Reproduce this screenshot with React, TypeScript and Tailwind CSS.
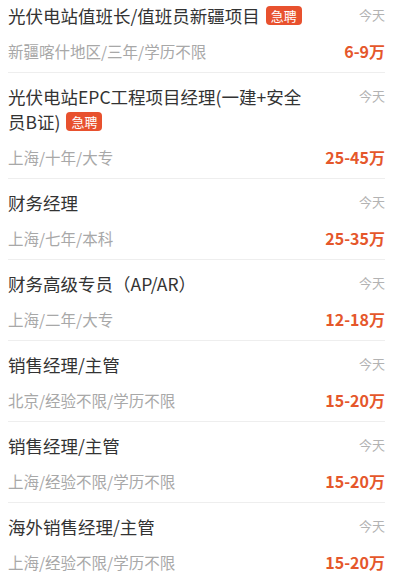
const FONT = "font-['PingFang_SC','Noto_Sans_CJK_SC',sans-serif]";

interface Job {
  title: string;
  urgent?: boolean;
  meta: string;
  salary: string;
}

const JOBS: Job[] = [
  { title: "光伏电站值班长/值班员新疆项目", urgent: true, meta: "新疆喀什地区/三年/学历不限", salary: "6-9万" },
  { title: "光伏电站EPC工程项目经理(一建+安全员B证)", urgent: true, meta: "上海/十年/大专", salary: "25-45万" },
  { title: "财务经理", meta: "上海/七年/本科", salary: "25-35万" },
  { title: "财务高级专员（AP/AR）", meta: "上海/二年/大专", salary: "12-18万" },
  { title: "销售经理/主管", meta: "北京/经验不限/学历不限", salary: "15-20万" },
  { title: "销售经理/主管", meta: "上海/经验不限/学历不限", salary: "15-20万" },
  { title: "海外销售经理/主管", meta: "上海/经验不限/学历不限", salary: "15-20万" },
];

function JobRow({ job }: { job: Job }) {
  return (
    <div className="border-b border-[#eeeeee] pt-[11px] pb-[11px]">
      <div className="flex items-start justify-between">
        <div className="w-[308px] text-[17.5px] leading-[25px] text-[#333333]">
          {job.title}
          {job.urgent && (
            <span className="ml-[6px] inline-block h-[19px] rounded-[4px] bg-[#e8512e] px-[5px] align-[2px] text-[13px] leading-[19px] text-white">
              急聘
            </span>
          )}
        </div>
        <span className="pt-[2px] text-[13px] leading-[20px] text-[#b3b3b3]">今天</span>
      </div>
      <div className="mt-[13px] flex items-center justify-between">
        <span className="text-[15.5px] leading-[20px] text-[#a8a8a8]">{job.meta}</span>
        <span className="text-[16px] font-bold leading-[20px] text-[#e5572b]">{job.salary}</span>
      </div>
    </div>
  );
}

export default function App() {
  return (
    <div className={`${FONT} h-[578px] w-[401px] overflow-hidden bg-white`}>
      <div className="-mt-[8px] pl-[8px] pr-[16px]">
        {JOBS.map((job, i) => (
          <JobRow key={i} job={job} />
        ))}
      </div>
    </div>
  );
}
